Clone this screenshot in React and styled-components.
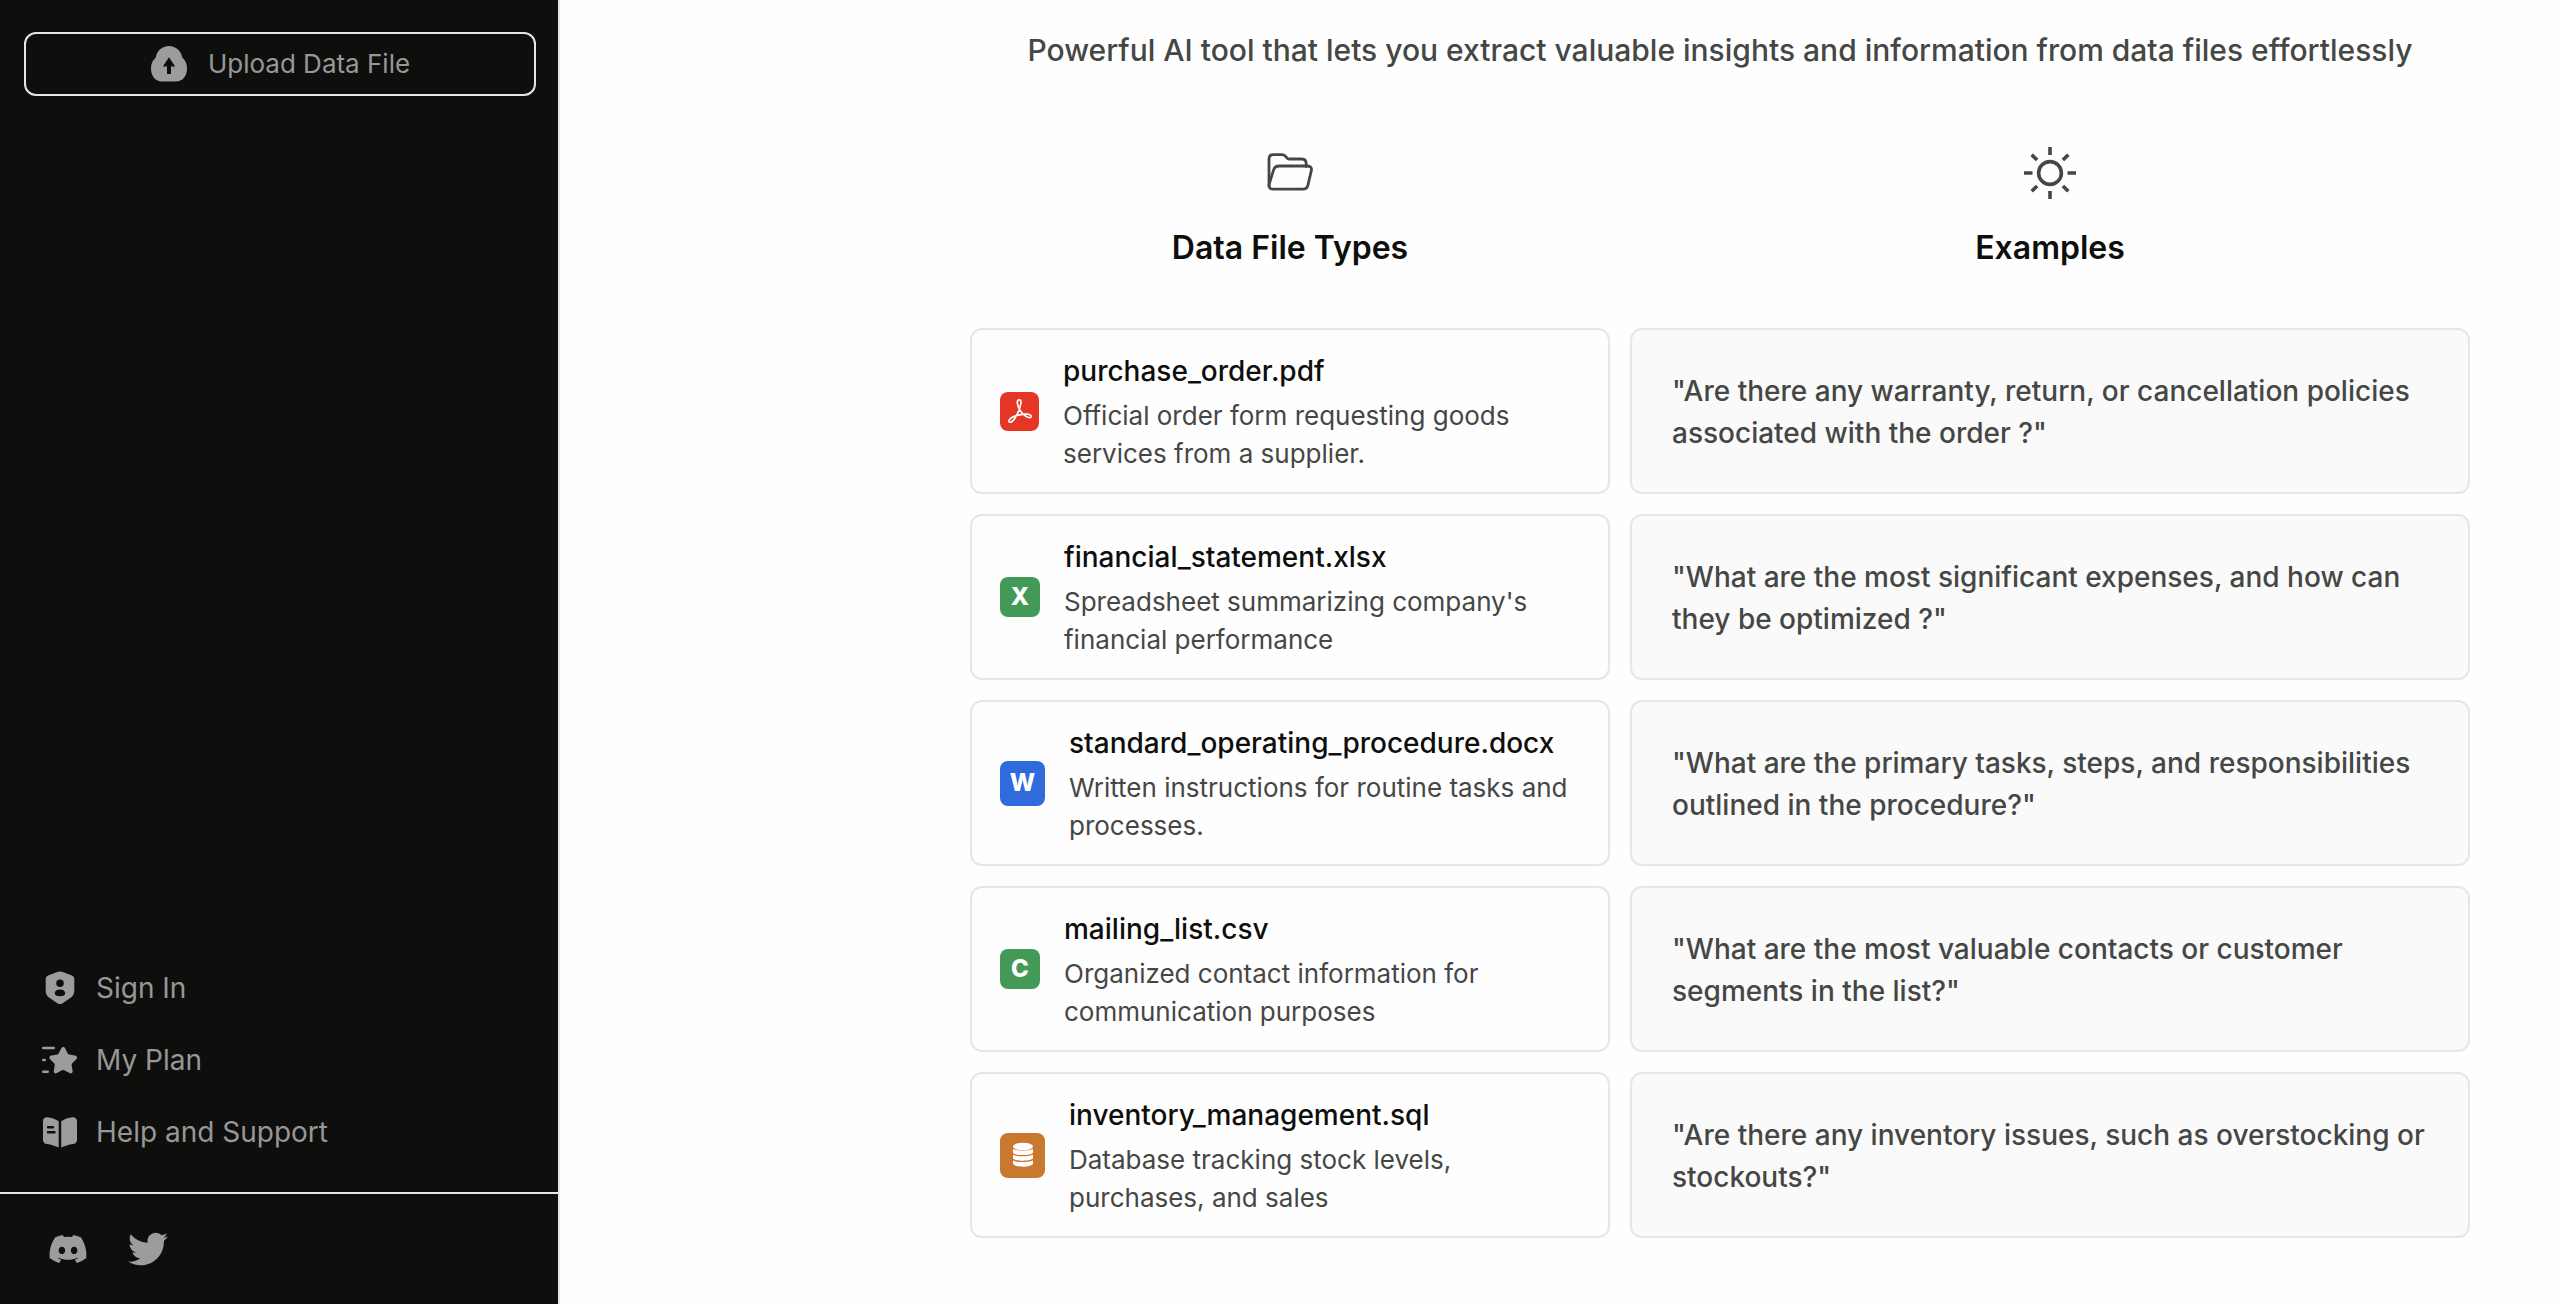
import React from "react";
import styled, { createGlobalStyle } from "styled-components";
import { FaDiscord, FaTwitter } from "react-icons/fa";

const GlobalStyle = createGlobalStyle`
  *, *::before, *::after { box-sizing: border-box; }
  html, body, #root { height: 100%; }
  body {
    margin: 0;
    background: #fefefe;
    color: #0e0f0c;
    font-family: Inter, "Liberation Sans", sans-serif;
  }
  h2, h3, p { margin: 0; padding: 0; }
  svg { display: block; flex-shrink: 0; }
`;

const Page = styled.div`
  display: flex;
  min-height: 100%;
`;

const Sidebar = styled.aside`
  display: flex;
  flex-direction: column;
  flex: 0 0 560px;
  height: 100vh;
  background: #0e0f0c;
  border-right: 2px solid #e6e6e6;
`;

const UploadArea = styled.div`
  padding: 32px 22px 0 24px;
`;

const UploadButton = styled.button`
  display: flex;
  align-items: center;
  justify-content: center;
  gap: 20px;
  width: 100%;
  height: 64px;
  padding: 0;
  background: transparent;
  border: 2px solid #e6e6e6;
  border-radius: 12px;
  color: #979797;
  font: 400 26px/40px Inter, "Liberation Sans", sans-serif;
  cursor: pointer;
`;

const Nav = styled.nav`
  display: flex;
  flex-direction: column;
  gap: 28px;
  margin-top: auto;
  padding: 0 40px 38px;
`;

const NavLink = styled.a`
  display: flex;
  align-items: center;
  gap: 16px;
  color: #979797;
  font-size: 28px;
  line-height: 44px;
  text-decoration: none;
`;

const Socials = styled.footer`
  display: flex;
  align-items: center;
  gap: 40px;
  height: 112px;
  padding: 0 48px;
  border-top: 2px solid #e6e6e6;
`;

const SocialLink = styled.a`
  display: block;
  color: #9b9c9e;
`;

const Main = styled.main`
  flex: 1;
  min-width: 0;
  padding: 24px 90px 66px 410px;
`;

const Subtitle = styled.p`
  color: #454745;
  font-size: 30px;
  font-weight: 500;
  line-height: 52px;
  text-align: center;
`;

const Columns = styled.div`
  display: grid;
  grid-template-columns: 16fr 21fr;
  column-gap: 20px;
  padding-top: 64px;
`;

const Column = styled.section`
  display: flex;
  flex-direction: column;
  gap: 20px;
`;

const ColumnHead = styled.header`
  display: flex;
  flex-direction: column;
  align-items: center;
  gap: 20px;
  padding-bottom: 36px;
  color: #454745;
`;

const ColumnIcon = styled.span`
  display: grid;
  place-items: center;
  height: 64px;
`;

const ColumnTitle = styled.h2`
  color: #0e0f0c;
  font-size: 32px;
  font-weight: 600;
  line-height: 48px;
`;

const Card = styled.article`
  display: flex;
  align-items: center;
  gap: 24px;
  height: 166px;
  padding: 0 28px;
  background: #fefefe;
  border: 2px solid #e6e6e6;
  border-radius: 12px;
`;

const ExampleCard = styled(Card)`
  padding: 2px 40px 0;
  background: #fafafa;
`;

const FileBadge = styled.span`
  display: grid;
  place-items: center;
  flex-shrink: 0;
  width: ${(p) => p.$size}px;
  height: ${(p) => p.$size}px;
  border-radius: 8px;
  background: ${(p) => p.$color};
  color: #fff;
  font-size: 24px;
  font-weight: 800;
  line-height: 24px;
`;

const FileName = styled.h3`
  font-size: 28px;
  font-weight: 500;
  line-height: 42px;
`;

const FileText = styled.p`
  margin-top: 5px;
  color: #454745;
  font-size: 26px;
  line-height: 38px;
`;

const Quote = styled.p`
  color: #454745;
  font-size: 28px;
  font-weight: 500;
  line-height: 42px;
`;

const UploadIcon = () => (
  <svg width="38" height="38" viewBox="0 0 38 38" fill="#9b9c9e" aria-hidden="true">
    <path fillRule="evenodd" d="M19 1C12.200 1 6.600 6 5.800 12.600C2.600 15.200 1 19 1 23.400C1 31 5.600 36.500 12 36.500H26C32.400 36.500 37 31 37 23.400C37 19 35.400 15.200 32.200 12.600C31.400 6 25.800 1 19 1ZM19 12.300L25.200 21.500H21V29H17V21.500H12.800Z" />
  </svg>
);

const ShieldIcon = () => (
  <svg width="40" height="40" viewBox="0 0 40 40" fill="#9b9c9e" aria-hidden="true">
    <path fillRule="evenodd" d="M17.300 3.900a7.500 7.500 0 0 1 5.400 0l8.700 3.300a4.500 4.500 0 0 1 2.900 4.200v11.400c0 3-1.500 5.700-4 7.300l-7.700 5.100a4.700 4.700 0 0 1-5.200 0l-7.700-5.100a8.700 8.700 0 0 1-4-7.300V11.400a4.500 4.500 0 0 1 2.900-4.200ZM20 11.500a3.800 3.800 0 1 0 0 7.600 3.800 3.800 0 0 0 0-7.600ZM20 21.500c-3.200 0-5.200 1.600-5.200 3.700s2 3 5.200 3 5.200-.9 5.200-3-2-3.700-5.200-3.700Z" />
  </svg>
);

const StarIcon = () => (
  <svg width="40" height="40" viewBox="0 0 40 40" fill="#9b9c9e" aria-hidden="true">
    <path d="M21.300 8.200c.8-1.700 3-1.700 3.800 0l2.800 5.500c.2.500.7.800 1.200.9l5.900.8c2 .3 2.700 2.500 1.300 3.900l-4.300 4.300c-.4.400-.5.900-.4 1.400l1 5.900c.3 1.900-1.300 3.100-3 2.200l-5.300-2.800a2.300 2.300 0 0 0-2.200 0l-5.300 2.800c-1.700.9-3.300-.3-3-2.200l1-5.900c.1-.5-.1-1-.4-1.400l-4.300-4.300c-1.400-1.400-.7-3.600 1.300-3.900l5.900-.8c.5-.1 1-.4 1.200-.9Z" />
    <path d="M3.200 8h10.600M3.200 20h1.600M3.200 31.700h4.600" fill="none" stroke="#9b9c9e" strokeWidth="2.400" strokeLinecap="round" />
  </svg>
);

const BookIcon = () => (
  <svg width="40" height="40" viewBox="0 0 40 40" fill="#9b9c9e" aria-hidden="true">
    <path fillRule="evenodd" d="M18.700 9.300v26.200c-3.200-1.500-7.200-2.900-11.800-3.500C4.600 31.700 3 30.100 3 27.900V9.200c0-2.600 1.900-4.100 4.300-3.900 4 .4 8 1.900 11.400 4ZM8 14.100a1.200 1.200 0 0 0 0 2.400h5a1.200 1.200 0 0 0 0-2.400ZM8 19.100a1.200 1.200 0 0 0 0 2.400h6.500a1.200 1.200 0 0 0 0-2.400Z" />
    <path d="M21.200 9.300v26.200c3.200-1.500 7.200-2.900 11.800-3.500 2.400-.3 4-1.900 4-4.100V9.200c0-2.600-2-4.100-4.400-3.900-4 .4-8 1.900-11.400 4Z" />
  </svg>
);

const FolderIcon = () => (
  <svg width="48" height="40" viewBox="0 0 48 40" fill="none" stroke="#454745" strokeWidth="2.800" strokeLinejoin="round" strokeLinecap="round" aria-hidden="true">
    <path d="M3 34V7c0-2.800 1.600-4.400 4.400-4.400h8.200c1.700 0 2.900.4 3.800 1.500l1.700 2c.5.600 1.100.9 2 .9h12.700c3.200 0 4.400 1.600 4.400 4.700v2.900" />
    <path d="M13.200 14h28c3.400 0 4.700 1.800 4.200 4.400l-3.600 15.200c-.7 2.600-2 3.600-4.800 3.600H7.400c-3.400 0-4.800-2-4.200-5l4.300-14c.9-3.200 2.500-4.200 5.700-4.200Z" />
  </svg>
);

const SunIcon = () => (
  <svg width="54" height="54" viewBox="0 0 54 54" fill="none" stroke="#454745" strokeWidth="3.600" strokeLinecap="butt" aria-hidden="true">
    <circle cx="27" cy="28" r="11.400" />
    <path d="M27 2v8M27 46v8M1 28h8.500M44.500 28h8.500M8.700 9.700l5.400 5.400M39.900 40.900l5.400 5.400M8.700 46.300l5.400-5.400M39.900 15.100l5.400-5.400" />
  </svg>
);

const PdfIcon = () => (
  <svg width="28" height="28" viewBox="0 0 28 28" fill="none" stroke="#fff" strokeWidth="1.700" strokeLinejoin="round" aria-hidden="true">
    <path d="M12.800 2.800c1.700-.4 2.500 1.200 2.100 3.600-.7 4.500-3.100 10.400-6 14.800-2 3-4.200 4.600-5.500 3.800-1.500-1 .2-3.400 3.900-5.200 4.300-2 9.800-3 13.900-2.700 3 .3 4.400 1.500 3.800 2.700-.8 1.400-3.500.9-6-1.100-3.400-2.700-6.700-7.600-7.500-11.900-.4-2.200-.2-3.700 1.300-4Z" />
  </svg>
);

const DatabaseIcon = () => (
  <svg width="22" height="26" viewBox="0 0 22 26" fill="#fff" aria-hidden="true">
    <ellipse cx="11" cy="4.500" rx="10" ry="3.800" />
    <path d="M1 6.700c1.600 2.400 18.400 2.400 20 0v3.800c0 3.400-20 3.400-20 0ZM1 12.500c1.600 2.400 18.400 2.400 20 0v3.600c0 3.400-20 3.400-20 0ZM1 18.200c1.600 2.400 18.400 2.400 20 0v3c0 4.600-20 4.600-20 0Z" />
  </svg>
);

const files = [
  { name: "purchase_order.pdf", text: ["Official order form requesting goods", "services from a supplier."], size: 39, color: "#e53525", mark: <PdfIcon /> },
  { name: "financial_statement.xlsx", text: ["Spreadsheet summarizing company's", "financial performance"], size: 40, color: "#439a57", mark: "X" },
  { name: "standard_operating_procedure.docx", text: ["Written instructions for routine tasks and", "processes."], size: 45, color: "#2f6bdc", mark: "W" },
  { name: "mailing_list.csv", text: ["Organized contact information for", "communication purposes"], size: 40, color: "#439a57", mark: "C" },
  { name: "inventory_management.sql", text: ["Database tracking stock levels,", "purchases, and sales"], size: 45, color: "#c97830", mark: <DatabaseIcon /> },
];

const examples = [
  ['"Are there any warranty, return, or cancellation policies', 'associated with the order ?"'],
  ['"What are the most significant expenses, and how can', 'they be optimized ?"'],
  ['"What are the primary tasks, steps, and responsibilities', 'outlined in the procedure?"'],
  ['"What are the most valuable contacts or customer', 'segments in the list?"'],
  ['"Are there any inventory issues, such as overstocking or', 'stockouts?"'],
];

export default function App() {
  return (
    <>
      <GlobalStyle />
      <Page>
        <Sidebar>
          <UploadArea>
            <UploadButton type="button"><UploadIcon />Upload Data File</UploadButton>
          </UploadArea>
          <Nav>
            <NavLink href="#sign-in"><ShieldIcon />Sign In</NavLink>
            <NavLink href="#plan"><StarIcon />My Plan</NavLink>
            <NavLink href="#support"><BookIcon />Help and Support</NavLink>
          </Nav>
          <Socials>
            <SocialLink href="#discord" aria-label="Discord"><FaDiscord size={40} /></SocialLink>
            <SocialLink href="#twitter" aria-label="Twitter"><FaTwitter size={40} /></SocialLink>
          </Socials>
        </Sidebar>
        <Main>
          <Subtitle>Powerful AI tool that lets you extract valuable insights and information from data files effortlessly</Subtitle>
          <Columns>
            <Column>
              <ColumnHead>
                <ColumnIcon><FolderIcon /></ColumnIcon>
                <ColumnTitle>Data File Types</ColumnTitle>
              </ColumnHead>
              {files.map((f) => (
                <Card key={f.name}>
                  <FileBadge $size={f.size} $color={f.color}>{f.mark}</FileBadge>
                  <div>
                    <FileName>{f.name}</FileName>
                    <FileText>{f.text[0]}<br />{f.text[1]}</FileText>
                  </div>
                </Card>
              ))}
            </Column>
            <Column>
              <ColumnHead>
                <ColumnIcon><SunIcon /></ColumnIcon>
                <ColumnTitle>Examples</ColumnTitle>
              </ColumnHead>
              {examples.map((q) => (
                <ExampleCard key={q[0]}>
                  <Quote>{q[0]}<br />{q[1]}</Quote>
                </ExampleCard>
              ))}
            </Column>
          </Columns>
        </Main>
      </Page>
    </>
  );
}
